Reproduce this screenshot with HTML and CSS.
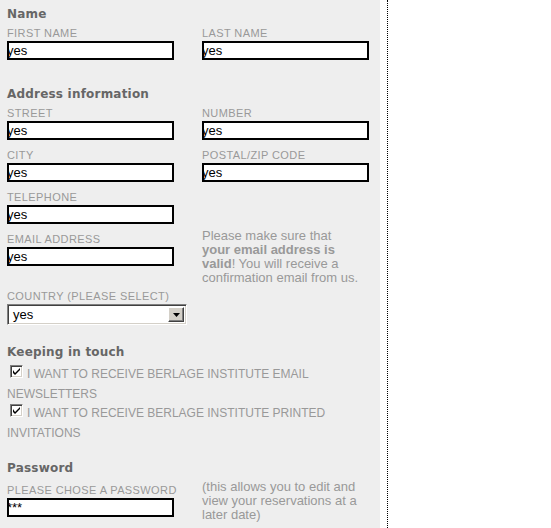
FILE: index.html
```html
<!DOCTYPE html>
<html lang="en">
<head>
<meta charset="utf-8">
<title>Registration</title>
<link rel="stylesheet" href="styles.css">
</head>
<body>
<div class="page">
  <form class="panel">
    <section class="section section--name">
      <h2 class="heading">Name</h2>
      <div class="grid">
        <div class="field"><label class="label">FIRST NAME</label><input class="text" type="text" value="yes"></div>
        <div class="field"><label class="label">LAST NAME</label><input class="text" type="text" value="yes"></div>
      </div>
    </section>

    <section class="section section--address">
      <h2 class="heading">Address information</h2>
      <div class="grid">
        <div class="field"><label class="label">STREET</label><input class="text" type="text" value="yes"></div>
        <div class="field"><label class="label">NUMBER</label><input class="text" type="text" value="yes"></div>
        <div class="field"><label class="label">CITY</label><input class="text" type="text" value="yes"></div>
        <div class="field"><label class="label">POSTAL/ZIP CODE</label><input class="text" type="text" value="yes"></div>
        <div class="field field--row"><label class="label">TELEPHONE</label><input class="text" type="text" value="yes"></div>
        <div class="field"><label class="label">EMAIL ADDRESS</label><input class="text" type="text" value="yes"></div>
        <p class="help">Please make sure that <b>your email address is valid</b>! You will receive a confirmation email from us.</p>
        <div class="field field--row">
          <label class="label">COUNTRY (PLEASE SELECT)</label>
          <div class="select">
            <span class="select-value">yes</span>
            <span class="select-button"><svg width="7" height="4" viewBox="0 0 7 4"><path d="M0 0h7L3.5 4z" fill="#000"/></svg></span>
          </div>
        </div>
      </div>
    </section>

    <section class="section section--touch">
      <h2 class="heading">Keeping in touch</h2>
      <p class="check"><span class="checkbox"><svg width="7" height="7" viewBox="0 0 7 7"><path d="M0 2v3l2 2 5-5V0L2 5z" fill="#000"/></svg></span>I WANT TO RECEIVE BERLAGE INSTITUTE EMAIL NEWSLETTERS</p>
      <p class="check"><span class="checkbox"><svg width="7" height="7" viewBox="0 0 7 7"><path d="M0 2v3l2 2 5-5V0L2 5z" fill="#000"/></svg></span>I WANT TO RECEIVE BERLAGE INSTITUTE PRINTED INVITATIONS</p>
    </section>

    <section class="section section--password">
      <h2 class="heading">Password</h2>
      <div class="grid">
        <div class="field"><label class="label">PLEASE CHOSE A PASSWORD</label><input class="text" type="text" value="***"></div>
        <p class="help">(this allows you to edit and view your reservations at a later date)</p>
        <div class="field field--row"><label class="label">REPEAT PASSWORD</label><input class="text" type="text" value="***"></div>
      </div>
    </section>
  </form>
</div>
</body>
</html>
```

FILE: styles.css
```css
html, body {
  margin: 0;
  padding: 0;
  background: #fff;
}

body {
  font-family: "Liberation Sans", Arial, sans-serif;
}

.page {
  width: 387px;
  min-height: 700px;
  border-right: 1px dotted #000;
}

.panel {
  width: 380px;
  background: #eeeeee;
  padding: 6px 0 40px 7px;
  box-sizing: border-box;
  min-height: 700px;
  display: flex;
  flex-direction: column;
}

.heading {
  margin: 0 0 4px;
  font-family: "DejaVu Sans", Verdana, sans-serif;
  font-size: 12px;
  line-height: 16px;
  letter-spacing: 0.2px;
  font-weight: bold;
  color: #666;
}

.section--address { margin-top: 26px; }
.section--touch { margin-top: 19px; }
.section--password { margin-top: 16px; }
.section--touch .heading { margin-bottom: 5px; }
.section--password .heading { margin-bottom: 7px; }

.grid {
  display: grid;
  grid-template-columns: 195px 178px;
  row-gap: 8px;
  align-items: start;
}

.field--row {
  grid-column: 1 / -1;
}

.label {
  display: block;
  font-size: 11px;
  line-height: 15px;
  letter-spacing: 0.4px;
  color: #999;
}

.text {
  display: block;
  box-sizing: border-box;
  width: 167px;
  height: 19px;
  margin: 0;
  padding: 0;
  border: 0;
  box-shadow: inset 0 0 0 2px #000;
  background: #fff;
  font-family: "Liberation Sans", Arial, sans-serif;
  font-size: 13px;
  color: #000;
  outline: none;
}

.help {
  margin: -3px 0 -4px;
  width: 160px;
  font-size: 13px;
  line-height: 14px;
  color: #999;
}

.help b {
  font-weight: bold;
}

.select {
  position: relative;
  box-sizing: border-box;
  width: 180px;
  height: 21px;
  border-style: solid;
  border-width: 1px;
  border-color: #808080 #fff #fff #808080;
  box-shadow: inset 1px 1px 0 #404040, inset -1px -1px 0 #d4d0c8;
  background: #fff;
  display: flex;
  align-items: center;
}

.select-value {
  padding-left: 5px;
  font-size: 13px;
  color: #000;
}

.select-button {
  position: absolute;
  right: 2px;
  top: 2px;
  width: 16px;
  height: 15px;
  box-sizing: border-box;
  background: #d4d0c8;
  border-style: solid;
  border-width: 1px;
  border-color: #fff #404040 #404040 #fff;
  box-shadow: inset -1px -1px 0 #808080;
  display: flex;
  align-items: center;
  justify-content: center;
}

.check {
  margin: 0;
  width: 373px;
  font-size: 12px;
  line-height: 19.7px;
  color: #999;
}

.checkbox {
  display: inline-block;
  box-sizing: border-box;
  width: 13px;
  height: 13px;
  margin: 0 4px 0 3px;
  vertical-align: baseline;
  background: #fff;
  border-style: solid;
  border-width: 1px;
  border-color: #808080 #fff #fff #808080;
  box-shadow: inset 1px 1px 0 #404040, inset -1px -1px 0 #d4d0c8;
  position: relative;
}

.checkbox svg {
  position: absolute;
  left: 2px;
  top: 2px;
}
```
